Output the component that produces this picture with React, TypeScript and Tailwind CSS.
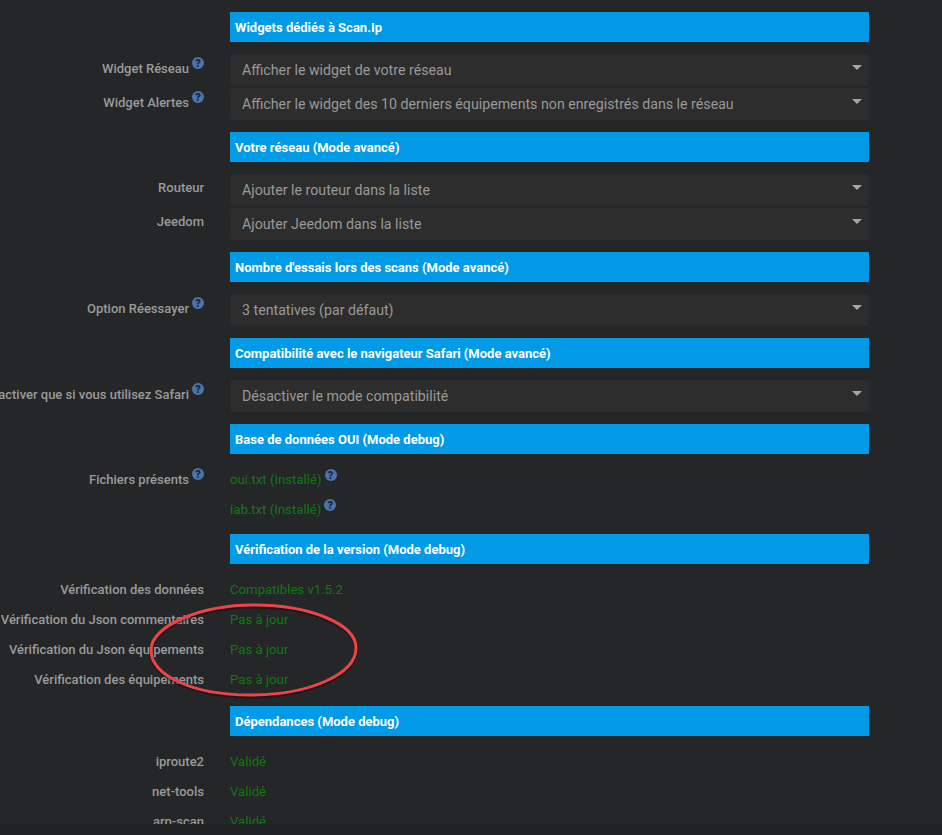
const fontStack = 'font-[Roboto,"Liberation_Sans",sans-serif]';

function Help() {
  return (
    <span className="flex h-[12px] w-[12px] shrink-0 items-center justify-center rounded-full bg-[#4a74ad] text-[11px] font-black leading-none text-[#23262a]">
      ?
    </span>
  );
}

function SectionTitle({ title }: { title: string }) {
  return (
    <div className="ml-[230px] flex h-[30px] w-[639px] items-center bg-[#019ae6] pl-[5px] pt-[2px] text-[13px] font-bold text-white">
      {title}
    </div>
  );
}

function Label({ text, help }: { text: string; help?: boolean }) {
  return (
    <div className="flex w-[204px] shrink-0 justify-end whitespace-nowrap text-[13px] font-medium text-[#9a9a9a]">
      <span>{text}</span>
      {help && <span className="-mt-[2px] ml-[3px] flex h-[12px]"><Help /></span>}
    </div>
  );
}

function SelectRow({ label, value, help }: { label: string; value: string; help?: boolean }) {
  return (
    <div className="flex h-[32px]">
      <div className={help ? 'pt-[5px]' : 'pt-[4px]'}>
        <Label text={label} help={help} />
      </div>
      <div className="ml-[26px] flex h-[32px] w-[639px] items-center justify-between rounded-[3px] border border-[#2a2b2c] bg-[#2d2d2d] pl-[11px] pr-[6px] text-[14.2px] text-[#999999]">
        <span className="pt-[2px]">{value}</span>
        <span className="mb-[5px] h-0 w-0 border-x-[5px] border-t-[5px] border-x-transparent border-t-[#a5a5a5]" />
      </div>
    </div>
  );
}

function StatusRow({ label, value, help, valueHelp }: { label?: string; value: string; help?: boolean; valueHelp?: boolean }) {
  return (
    <div className="flex h-[30px] items-center pt-[2px]">
      <Label text={label ?? ''} help={help} />
      <div className="ml-[26px] flex items-start text-[13.2px] text-[#0e7a0e]">
        <span>{value}</span>
        {valueHelp && <span className="-mt-[1px] ml-[3px] flex h-[12px]"><Help /></span>}
      </div>
    </div>
  );
}

export default function App() {
  return (
    <div className={`${fontStack} relative h-[835px] w-[942px] overflow-hidden bg-[#242628]`}>
      <main className="h-[824px] overflow-hidden pt-[12px]">
        <SectionTitle title="Widgets dédiés à Scan.Ip" />
        <div className="mb-[12px] mt-[12px] flex flex-col gap-[2px]">
          <SelectRow label="Widget Réseau" help value="Afficher le widget de votre réseau" />
          <SelectRow label="Widget Alertes" help value="Afficher le widget des 10 derniers équipements non enregistrés dans le réseau" />
        </div>

        <SectionTitle title="Votre réseau (Mode avancé)" />
        <div className="mb-[12px] mt-[12px] flex flex-col gap-[2px]">
          <SelectRow label="Routeur" value="Ajouter le routeur dans la liste" />
          <SelectRow label="Jeedom" value="Ajouter Jeedom dans la liste" />
        </div>

        <SectionTitle title="Nombre d'essais lors des scans (Mode avancé)" />
        <div className="mb-[12px] mt-[12px]">
          <SelectRow label="Option Réessayer" help value="3 tentatives (par défaut)" />
        </div>

        <SectionTitle title="Compatibilité avec le navigateur Safari (Mode avancé)" />
        <div className="mb-[12px] mt-[12px]">
          <SelectRow label="N'activer que si vous utilisez Safari" help value="Désactiver le mode compatibilité" />
        </div>

        <SectionTitle title="Base de données OUI (Mode debug)" />
        <div className="mb-[10px] mt-[10px]">
          <StatusRow label="Fichiers présents" help value="oui.txt (Installé)" valueHelp />
          <StatusRow value="iab.txt (Installé)" valueHelp />
        </div>

        <SectionTitle title="Vérification de la version (Mode debug)" />
        <div className="mb-[12px] mt-[10px]">
          <StatusRow label="Vérification des données" value="Compatibles v1.5.2" />
          <StatusRow label="Vérification du Json commentaires" value="Pas à jour" />
          <StatusRow label="Vérification du Json équipements" value="Pas à jour" />
          <StatusRow label="Vérification des équipements" value="Pas à jour" />
        </div>

        <SectionTitle title="Dépendances (Mode debug)" />
        <div className="mt-[10px]">
          <StatusRow label="iproute2" value="Validé" />
          <StatusRow label="net-tools" value="Validé" />
          <StatusRow label="arp-scan" value="Validé" />
        </div>
      </main>
      <footer className="h-[11px] bg-[#202224]" />

      {/* annotation drawn over the screenshot */}
      <svg className="absolute left-[146px] top-[598px]" width="220" height="106" viewBox="0 0 220 106" fill="none">
        <path
          d="M5 52C5 28 54 7 108 7C164 7 210 26 210 50C210 76 164 97 104 97C48 97 5 78 5 52Z"
          stroke="#000000"
          strokeOpacity="0.3"
          strokeWidth="3"
          transform="translate(0 2)"
        />
        <path
          d="M5 52C5 28 54 7 108 7C164 7 210 26 210 50C210 76 164 97 104 97C48 97 5 78 5 52Z"
          stroke="#ef4347"
          strokeWidth="3"
        />
      </svg>
    </div>
  );
}
